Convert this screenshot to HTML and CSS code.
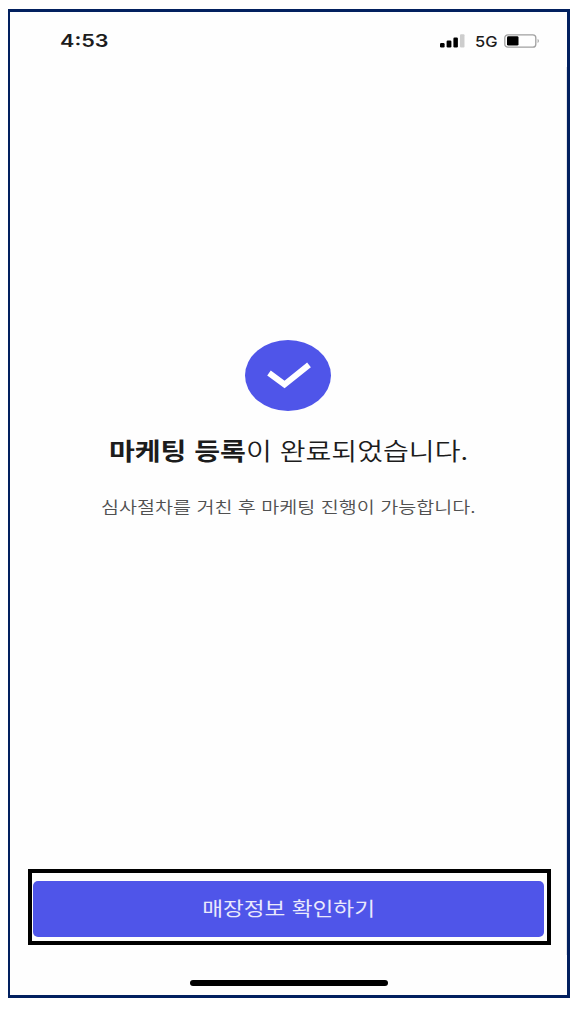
FILE: index.html
```html
<!DOCTYPE html>
<html lang="ko">
<head>
  <meta charset="UTF-8" />
  <title>마케팅 등록 완료</title>
  <link rel="stylesheet" href="styles.css">
</head>
<body>
  <div class="phone">
    <header class="status-bar">
      <span class="time">4:53</span>
      <div class="status-icons">
        <svg class="signal" width="25" height="14" viewBox="0 0 25 14">
          <rect x="0" y="9" width="4.6" height="4.5" rx="1.2" />
          <rect x="6.6" y="6.5" width="4.8" height="7" rx="1.2" />
          <rect x="13.4" y="3.5" width="4.5" height="10" rx="1.2" />
          <rect class="off" x="20" y="0.3" width="4.5" height="13.2" rx="1" />
        </svg>
        <span class="network">5G</span>
        <svg class="battery" width="36" height="14" viewBox="0 0 36 14">
          <rect class="shell" x="0.8" y="0.8" width="31" height="12.4" rx="3" />
          <rect x="3" y="2.2" width="11.5" height="9.4" rx="1.4" />
          <path class="tip" d="M33.6 4.8 Q36.2 7 33.6 9.2 Z" />
        </svg>
      </div>
    </header>

    <main class="complete">
      <svg class="check" width="86" height="71" viewBox="0 0 86 71">
        <ellipse cx="43" cy="35.5" rx="43" ry="35.5" />
        <path d="M24 33 L39.5 44.5 L64 24.8" />
      </svg>
      <h1 class="title"><b>마케팅 등록</b>이 완료되었습니다.</h1>
      <p class="desc">심사절차를 거친 후 마케팅 진행이 가능합니다.</p>
    </main>

    <div class="highlight">
      <button class="confirm-btn"><span>매장정보 확인하기</span></button>
    </div>
    <div class="home-bar"></div>
  </div>
</body>
</html>
```

FILE: styles.css
```css
body {
  margin: 0;
  background: #fff;
  font-family: 'Noto Sans CJK KR', sans-serif;
  overflow: hidden;
}

.phone {
  box-sizing: border-box;
  display: flex;
  flex-direction: column;
  width: 562px;
  height: 989px;
  margin: 9px 0 0 8px;
  border: 3px solid #02205f;
  border-left-width: 2px;
  background: linear-gradient(#e4e5e8, #e4e5e8) right 55px / 1px 888px no-repeat #fefefe;
}

.status-bar {
  display: flex;
  justify-content: space-between;
  align-items: center;
  height: 24px;
  padding: 17px 27px 0 50px;
  font-family: Inter, sans-serif;
  color: #1c1c1c;
}

.time {
  font-size: 17px;
  font-weight: 600;
  transform: scaleX(1.27);
  transform-origin: left;
}

.status-icons {
  display: flex;
  align-items: center;
}

.network {
  width: 21px;
  margin: 0 8px 0 10px;
  font-size: 15px;
  font-weight: 500;
  transform: scaleX(1.1);
  transform-origin: left;
}

.signal {
  fill: #000;
}

.signal .off {
  fill: #cdcdcd;
}

.battery .shell {
  fill: none;
  stroke: #a0a0a0;
  stroke-width: 1.3;
}

.battery .tip {
  fill: #a0a0a0;
}

.complete {
  display: flex;
  flex: 1;
  flex-direction: column;
  align-items: center;
  padding-top: 287px;
  white-space: nowrap;
}

.check {
  margin-right: 1px;
  fill: #4f55e9;
}

.check path {
  fill: none;
  stroke: #fff;
  stroke-width: 6;
}

.title {
  margin: 21px 0 0;
  font-size: 24px;
  font-weight: 350;
  line-height: 36px;
  color: #1c1c1c;
  transform: scaleX(1.17);
}

.title b {
  font-weight: 700;
}

.desc {
  margin: 25px 0 0;
  font-size: 16px;
  font-weight: 350;
  line-height: 26px;
  color: #505050;
  transform: scaleX(1.222);
}

.highlight {
  box-sizing: border-box;
  height: 76px;
  margin: 0 16px 35px 18px;
  padding: 8px 3px 4px 1px;
  border: 4px solid #000;
}

.confirm-btn {
  display: block;
  width: 100%;
  height: 56px;
  padding: 0 0 3px;
  border: 0;
  border-radius: 5px;
  background: #4f55e9;
  color: #e9e9fc;
  font-family: inherit;
  font-size: 19px;
}

.confirm-btn span {
  display: inline-block;
  transform: scaleX(1.19);
}

.home-bar {
  width: 198px;
  height: 6px;
  margin: 0 0 9px 180px;
  border-radius: 3px;
  background: #000;
}
```
